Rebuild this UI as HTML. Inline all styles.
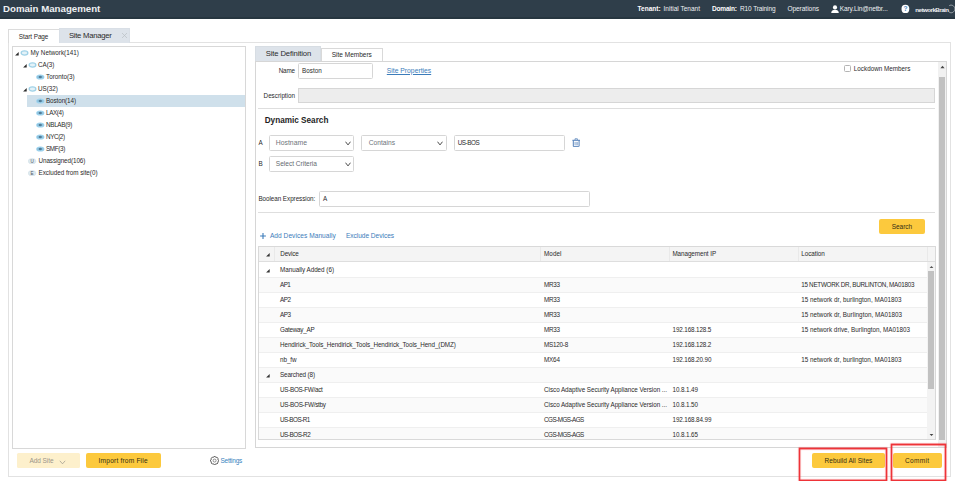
<!DOCTYPE html>
<html>
<head>
<meta charset="utf-8">
<title>Domain Management</title>
<style>
*{box-sizing:border-box;margin:0;padding:0}
html,body{width:955px;height:481px;overflow:hidden;background:#fff;font-family:"Liberation Sans",sans-serif;color:#333;font-size:7px}
div,span,svg{position:absolute}
.t{white-space:nowrap;line-height:1;color:#2a2a2a}
#hdr{left:0;top:0;width:955px;height:19px;background:#2f3e4a}
#hdr .t{color:#eef1f3}
#hdr .t b{color:#fff}
.btn{border-radius:2px;background:#fcc93d}
.inp{border:1px solid #d6d6d6;background:#fff;border-radius:1.5px}
.hr{height:1px;background:#dedede}
.vl{width:1px;background:#e4e4e4}
.lnk{color:#3c7cba}
</style>
</head>
<body>
<div id="hdr">
<div style="left:0;top:17px;width:955px;height:2px;background:#273640"></div>
<div class="t " style="left:3px;top:4.25px;font-size:9.69px;font-weight:bold;">Domain Management</div>
<div class="t " style="left:637.6px;top:5.95px;font-size:6.5px;letter-spacing:0.016px;"><b>Tenant:</b></div>
<div class="t " style="left:663.5px;top:5.95px;font-size:6.5px;letter-spacing:0.009px;">Initial Tenant</div>
<div class="t " style="left:712px;top:5.95px;font-size:6.5px;letter-spacing:-0.172px;"><b>Domain:</b></div>
<div class="t " style="left:740px;top:5.95px;font-size:6.5px;letter-spacing:-0.121px;">R10 Training</div>
<div class="t " style="left:787.4px;top:5.95px;font-size:6.5px;letter-spacing:-0.020px;">Operations</div>
<svg style="left:830.5px;top:4.8px" width="8" height="8.4" viewBox="0 0 8 8.4"><circle cx="4" cy="2.4" r="2.1" fill="#fff"/><path d="M0.2 8.2 C0.2 5.4 1.8 4.7 4 4.7 C6.2 4.7 7.8 5.4 7.8 8.2 Z" fill="#fff"/></svg>
<div class="t " style="left:839.8px;top:5.95px;font-size:6.5px;letter-spacing:-0.120px;">Kary.Lin@netbr...</div>
<svg style="left:901px;top:4px" width="9" height="10" viewBox="0 0 9 10"><ellipse cx="4.4" cy="4.9" rx="3.9" ry="4.2" fill="#fff"/></svg>
<div class="t " style="left:903.5px;top:5.90px;font-size:6.6px;color:#4a86bd;font-weight:bold;">?</div>
<div class="t " style="left:915.3px;top:6.95px;font-size:6.1px;font-weight:bold;letter-spacing:-0.473px;">networkBrain</div>
<svg style="left:945.5px;top:3.5px" width="9.5" height="10" viewBox="0 0 9.5 10"><path d="M3.2 1.7 C5 0.4 8.6 1.4 8.8 4.6 C9 7.4 6.4 9.4 4.2 8.6 C3 8.2 2.2 7.2 2.4 6" fill="none" stroke="#c3c9ce" stroke-width="0.7"/></svg>
</div>
<div class="" style="left:8px;top:42px;width:943.00px;height:435.00px;border:1px solid #e2e2e2;background:#fff"></div>
<div class="" style="left:8px;top:29px;width:52.00px;height:14.00px;border:1px solid #dcdcdc;border-bottom:none;background:#fff"></div>
<div class="t " style="left:18.8px;top:34.20px;font-size:6.4px;letter-spacing:-0.064px;">Start Page</div>
<div class="" style="left:59px;top:28px;width:71.00px;height:14.50px;border:1px solid #d9dfe6;border-bottom:none;background:#dde3ea"></div>
<div class="t " style="left:68.9px;top:32.15px;font-size:7.7px;letter-spacing:-0.250px;">Site Manager</div>
<svg style="left:121px;top:32.2px" width="7" height="7" viewBox="0 0 7 7"><path d="M1 1 L6 6 M6 1 L1 6" stroke="#b9bec3" stroke-width="0.7" fill="none"/></svg>
<div class="" style="left:11.5px;top:46px;width:234.80px;height:403.00px;border:1px solid #d8d8d8;background:#fff"></div>
<div class="" style="left:27.2px;top:95.2px;width:218.30px;height:11.50px;background:#cfe0eb"></div>
<svg style="left:15px;top:51.60px" width="4" height="4" viewBox="0 0 4 4"><path d="M3.7 0 L3.7 3.6 L0.1 3.6 Z" fill="#2b2b2b"/></svg>
<svg style="left:20.2px;top:50.00px" width="9" height="6" viewBox="0 0 9 6"><ellipse cx="4.5" cy="3" rx="3.35" ry="2.05" fill="#e4f2f8" stroke="#9fd1e7" stroke-width="1.3"/></svg>
<div class="t " style="left:30.6px;top:49.55px;font-size:6.3px;letter-spacing:0.023px;">My Network(141)</div>
<svg style="left:23px;top:63.62px" width="4" height="4" viewBox="0 0 4 4"><path d="M3.7 0 L3.7 3.6 L0.1 3.6 Z" fill="#2b2b2b"/></svg>
<svg style="left:27.8px;top:62.02px" width="9" height="6" viewBox="0 0 9 6"><ellipse cx="4.5" cy="3" rx="3.35" ry="2.05" fill="#e4f2f8" stroke="#9fd1e7" stroke-width="1.3"/></svg>
<div class="t " style="left:38px;top:61.57px;font-size:6.3px;">CA(3)</div>
<svg style="left:35.6px;top:73.84px" width="9" height="6" viewBox="0 0 9 6"><ellipse cx="4.3" cy="3" rx="4.1" ry="2.6" fill="#9dd2ed"/><path d="M1.2 3 H7.4" stroke="#76a9c6" stroke-width="0.7"/><ellipse cx="4.3" cy="3" rx="1.6" ry="1.25" fill="#527d98"/></svg>
<div class="t " style="left:46px;top:73.59px;font-size:6.3px;">Toronto(3)</div>
<svg style="left:23px;top:87.66px" width="4" height="4" viewBox="0 0 4 4"><path d="M3.7 0 L3.7 3.6 L0.1 3.6 Z" fill="#2b2b2b"/></svg>
<svg style="left:27.8px;top:86.06px" width="9" height="6" viewBox="0 0 9 6"><ellipse cx="4.5" cy="3" rx="3.35" ry="2.05" fill="#e4f2f8" stroke="#9fd1e7" stroke-width="1.3"/></svg>
<div class="t " style="left:38px;top:85.61px;font-size:6.3px;">US(32)</div>
<svg style="left:35.6px;top:97.88px" width="9" height="6" viewBox="0 0 9 6"><ellipse cx="4.3" cy="3" rx="4.1" ry="2.6" fill="#9dd2ed"/><path d="M1.2 3 H7.4" stroke="#76a9c6" stroke-width="0.7"/><ellipse cx="4.3" cy="3" rx="1.6" ry="1.25" fill="#527d98"/></svg>
<div class="t " style="left:46px;top:97.63px;font-size:6.3px;letter-spacing:-0.092px;">Boston(14)</div>
<svg style="left:35.6px;top:109.90px" width="9" height="6" viewBox="0 0 9 6"><ellipse cx="4.3" cy="3" rx="4.1" ry="2.6" fill="#9dd2ed"/><path d="M1.2 3 H7.4" stroke="#76a9c6" stroke-width="0.7"/><ellipse cx="4.3" cy="3" rx="1.6" ry="1.25" fill="#527d98"/></svg>
<div class="t " style="left:46px;top:109.65px;font-size:6.3px;letter-spacing:-0.368px;">LAX(4)</div>
<svg style="left:35.6px;top:121.92px" width="9" height="6" viewBox="0 0 9 6"><ellipse cx="4.3" cy="3" rx="4.1" ry="2.6" fill="#9dd2ed"/><path d="M1.2 3 H7.4" stroke="#76a9c6" stroke-width="0.7"/><ellipse cx="4.3" cy="3" rx="1.6" ry="1.25" fill="#527d98"/></svg>
<div class="t " style="left:46px;top:121.67px;font-size:6.3px;letter-spacing:-0.295px;">NBLAB(9)</div>
<svg style="left:35.6px;top:133.94px" width="9" height="6" viewBox="0 0 9 6"><ellipse cx="4.3" cy="3" rx="4.1" ry="2.6" fill="#9dd2ed"/><path d="M1.2 3 H7.4" stroke="#76a9c6" stroke-width="0.7"/><ellipse cx="4.3" cy="3" rx="1.6" ry="1.25" fill="#527d98"/></svg>
<div class="t " style="left:46px;top:133.69px;font-size:6.3px;letter-spacing:-0.384px;">NYC(2)</div>
<svg style="left:35.6px;top:145.96px" width="9" height="6" viewBox="0 0 9 6"><ellipse cx="4.3" cy="3" rx="4.1" ry="2.6" fill="#9dd2ed"/><path d="M1.2 3 H7.4" stroke="#76a9c6" stroke-width="0.7"/><ellipse cx="4.3" cy="3" rx="1.6" ry="1.25" fill="#527d98"/></svg>
<div class="t " style="left:46px;top:145.71px;font-size:6.3px;letter-spacing:-0.350px;">SMF(3)</div>
<svg style="left:28.2px;top:157.78px" width="8.4" height="6.4" viewBox="0 0 8.4 6.4"><ellipse cx="4.1" cy="3.2" rx="3.9" ry="2.7" fill="#dfeaef" stroke="#cfdfe6" stroke-width="0.5"/><text x="4.1" y="4.8" font-size="4.6" text-anchor="middle" fill="#505860" font-family="Liberation Sans, sans-serif">U</text></svg>
<div class="t " style="left:38.5px;top:157.73px;font-size:6.3px;letter-spacing:-0.079px;">Unassigned(106)</div>
<svg style="left:28.2px;top:169.80px" width="8.4" height="6.4" viewBox="0 0 8.4 6.4"><ellipse cx="4.1" cy="3.2" rx="3.9" ry="2.7" fill="#dfeaef" stroke="#cfdfe6" stroke-width="0.5"/><text x="4.1" y="4.8" font-size="4.6" text-anchor="middle" fill="#505860" font-family="Liberation Sans, sans-serif">E</text></svg>
<div class="t " style="left:38.5px;top:169.75px;font-size:6.3px;letter-spacing:-0.025px;">Excluded from site(0)</div>
<div class="" style="left:17px;top:453.3px;width:63.00px;height:14.70px;background:#fdf0cc;border-radius:1.5px"></div>
<div class="t " style="left:29.4px;top:458.35px;font-size:6.5px;color:#9a958a;letter-spacing:-0.047px;">Add Site</div>
<svg style="left:58.9px;top:459.6px" width="7" height="5" viewBox="0 0 7 5"><path d="M0.8 0.8 L3.5 3.8 L6.2 0.8" fill="none" stroke="#9a958a" stroke-width="0.7"/></svg>
<div class="btn" style="left:86px;top:453.3px;width:74.60px;height:14.70px;"></div>
<div class="t " style="left:98.6px;top:458.30px;font-size:6.6px;color:#332d14;letter-spacing:0.187px;">Import from File</div>
<svg style="left:210px;top:455.9px" width="9.2" height="9.2" viewBox="0 0 9.2 9.2"><path d="M3.85 0.47 L5.35 0.47 L5.85 1.55 L5.87 1.55 L6.99 1.15 L8.05 2.21 L7.65 3.33 L7.65 3.35 L8.73 3.85 L8.73 5.35 L7.65 5.85 L7.65 5.87 L8.05 6.99 L6.99 8.05 L5.87 7.65 L5.85 7.65 L5.35 8.73 L3.85 8.73 L3.35 7.65 L3.33 7.65 L2.21 8.05 L1.15 6.99 L1.55 5.87 L1.55 5.85 L0.47 5.35 L0.47 3.85 L1.55 3.35 L1.55 3.33 L1.15 2.21 L2.21 1.15 L3.33 1.55 L3.35 1.55 Z" fill="none" stroke="#484848" stroke-width="0.8" stroke-linejoin="round"/><circle cx="4.6" cy="4.6" r="1.5" fill="none" stroke="#505050" stroke-width="0.6"/></svg>
<div class="t " style="left:220.4px;top:458.25px;font-size:6.5px;color:#3a84c0;letter-spacing:-0.223px;">Settings</div>
<div class="" style="left:254.7px;top:46.2px;width:66.80px;height:15.80px;border:1px solid #d7dde3;border-bottom:none;background:#dde3ea"></div>
<div class="t " style="left:265.7px;top:50.35px;font-size:7.7px;letter-spacing:-0.134px;">Site Definition</div>
<div class="" style="left:320.7px;top:47.5px;width:62.30px;height:14.50px;border:1px solid #d9d9d9;border-bottom:none;background:#fff"></div>
<div class="t " style="left:331.7px;top:51.74px;font-size:6.52px;">Site Members</div>
<div class="" style="left:254.7px;top:61px;width:692.30px;height:386.50px;border:1px solid #d6d6d6;background:#fff"></div>
<div class="" style="left:938.3px;top:62px;width:7.70px;height:384.50px;background:#f1f1f1"></div>
<div class="" style="left:939.2px;top:77px;width:5.80px;height:362.60px;background:#c1c1c1"></div>
<svg style="left:939.8px;top:65px" width="5" height="4" viewBox="0 0 5 4"><path d="M0.4 3.2 L2.5 0.8 L4.6 3.2 Z" fill="#444"/></svg>
<div class="t " style="left:278.7px;top:67.75px;font-size:6.3px;letter-spacing:-0.126px;">Name</div>
<div class="inp" style="left:298px;top:63px;width:75.20px;height:16.00px;"></div>
<div class="t " style="left:302px;top:67.65px;font-size:6.3px;letter-spacing:0.031px;">Boston</div>
<div class="t lnk" style="left:386.8px;top:67.71px;font-size:6.77px;text-decoration:underline;">Site Properties</div>
<div class="" style="left:844px;top:65.4px;width:7.00px;height:7.10px;border:1px solid #b4b4b4;border-radius:1.5px;background:#fff"></div>
<div class="t " style="left:853.8px;top:65.95px;font-size:6.3px;letter-spacing:0.014px;">Lockdown Members</div>
<div class="t " style="left:263.6px;top:92.85px;font-size:6.3px;letter-spacing:-0.010px;">Description</div>
<div class="" style="left:298px;top:88px;width:637.20px;height:15.00px;border:1px solid #d6d6d6;background:#ededed"></div>
<div class="hr" style="left:258.4px;top:108.2px;width:676.80px;height:1.00px;"></div>
<div class="t " style="left:264.7px;top:117.20px;font-size:8.2px;color:#1e1e1e;font-weight:bold;">Dynamic Search</div>
<div class="t " style="left:258.4px;top:139.55px;font-size:6.3px;">A</div>
<div class="inp" style="left:268.6px;top:135px;width:85.30px;height:16.00px;"></div>
<div class="t " style="left:275.8px;top:139.57px;font-size:6.85px;color:#6e747a;">Hostname</div>
<svg style="left:344.70000000000005px;top:141.20px" width="6" height="5" viewBox="0 0 6 5"><path d="M0.5 0.7 L3 3.9 L5.5 0.7" fill="none" stroke="#444" stroke-width="0.95"/></svg>
<div class="inp" style="left:361px;top:135px;width:85.80px;height:16.00px;"></div>
<div class="t " style="left:368.7px;top:139.66px;font-size:6.69px;color:#6e747a;">Contains</div>
<svg style="left:437.40000000000003px;top:141.20px" width="6" height="5" viewBox="0 0 6 5"><path d="M0.5 0.7 L3 3.9 L5.5 0.7" fill="none" stroke="#444" stroke-width="0.95"/></svg>
<div class="inp" style="left:454px;top:135px;width:110.70px;height:16.00px;"></div>
<div class="t " style="left:457.7px;top:139.85px;font-size:6.3px;letter-spacing:-0.426px;">US-BOS</div>
<svg style="left:571.6px;top:138px" width="8.4" height="9.2" viewBox="0 0 8.4 9.2"><path d="M0.4 2.3 H8" stroke="#3d6fb0" stroke-width="0.9"/><path d="M3 1.9 V0.8 H5.4 V1.9" fill="none" stroke="#3d6fb0" stroke-width="0.7"/><path d="M1.3 2.6 V8.1 Q1.3 8.7 1.9 8.7 H6.5 Q7.1 8.7 7.1 8.1 V2.6" fill="none" stroke="#3d6fb0" stroke-width="0.9"/><path d="M3 3.9 V7.4 M4.2 3.9 V7.4 M5.4 3.9 V7.4" stroke="#5a86bf" stroke-width="0.6"/></svg>
<div class="t " style="left:258.4px;top:161.25px;font-size:6.3px;">B</div>
<div class="inp" style="left:268.6px;top:156px;width:85.30px;height:16.00px;"></div>
<div class="t " style="left:275.8px;top:160.72px;font-size:6.56px;color:#646a70;">Select Criteria</div>
<svg style="left:344.70000000000005px;top:162.20px" width="6" height="5" viewBox="0 0 6 5"><path d="M0.5 0.7 L3 3.9 L5.5 0.7" fill="none" stroke="#444" stroke-width="0.95"/></svg>
<div class="t " style="left:258.4px;top:195.65px;font-size:6.3px;letter-spacing:-0.047px;">Boolean Expression:</div>
<div class="inp" style="left:319.3px;top:191px;width:270.50px;height:16.00px;"></div>
<div class="t " style="left:322.9px;top:195.85px;font-size:6.3px;">A</div>
<div class="hr" style="left:258.4px;top:212px;width:676.80px;height:1.00px;"></div>
<div class="btn" style="left:879.2px;top:219.2px;width:45.40px;height:14.60px;"></div>
<div class="t " style="left:891.7px;top:223.95px;font-size:6.5px;color:#332d14;letter-spacing:-0.033px;">Search</div>
<svg style="left:260.3px;top:232.7px" width="6" height="6" viewBox="0 0 6 6"><path d="M3 0.1 V5.9 M0.1 3 H5.9" stroke="#3c7cba" stroke-width="1.1"/></svg>
<div class="t lnk" style="left:269.9px;top:232.50px;font-size:6.6px;letter-spacing:0.035px;">Add Devices Manually</div>
<div class="t lnk" style="left:345.9px;top:232.50px;font-size:6.6px;letter-spacing:-0.039px;">Exclude Devices</div>
<div class="" style="left:258px;top:245.8px;width:678.00px;height:194.20px;border:1px solid #d9d9d9;background:#fff"></div>
<div class="" style="left:259px;top:246.8px;width:676.00px;height:15.00px;background:#f4f4f4;border-bottom:1px solid #dedede"></div>
<div class="" style="left:273.5px;top:247px;width:1.00px;height:14.00px;background:#e9e9e9"></div>
<div class="" style="left:540.2px;top:247px;width:1.00px;height:14.00px;background:#e9e9e9"></div>
<div class="" style="left:668.8px;top:247px;width:1.00px;height:14.00px;background:#e9e9e9"></div>
<div class="" style="left:797.8px;top:247px;width:1.00px;height:14.00px;background:#e9e9e9"></div>
<div class="" style="left:927px;top:247px;width:1.00px;height:14.00px;background:#e9e9e9"></div>
<svg style="left:265.6px;top:252.80px" width="4" height="4" viewBox="0 0 4 4"><path d="M3.7 0 L3.7 3.6 L0.1 3.6 Z" fill="#333"/></svg>
<div class="t " style="left:280.3px;top:250.85px;font-size:6.3px;letter-spacing:-0.160px;">Device</div>
<div class="t " style="left:544px;top:250.85px;font-size:6.3px;letter-spacing:0.088px;">Model</div>
<div class="t " style="left:672.4px;top:250.85px;font-size:6.3px;letter-spacing:-0.060px;">Management IP</div>
<div class="t " style="left:801.2px;top:250.85px;font-size:6.3px;letter-spacing:-0.027px;">Location</div>
<div class="" style="left:259px;top:263.0px;width:668.00px;height:15.00px;background:#fff;border-bottom:1px solid #efefef"></div>
<svg style="left:265.8px;top:268.50px" width="4" height="4" viewBox="0 0 4 4"><path d="M3.7 0 L3.7 3.6 L0.1 3.6 Z" fill="#333"/></svg>
<div class="t " style="left:280px;top:266.75px;font-size:6.3px;letter-spacing:-0.016px;">Manually Added (6)</div>
<div class="" style="left:259px;top:278.0px;width:668.00px;height:15.00px;background:#fafafa;border-bottom:1px solid #efefef"></div>
<div class="t " style="left:280px;top:281.75px;font-size:6.3px;letter-spacing:-0.536px;">AP1</div>
<div class="t " style="left:544.1px;top:281.75px;font-size:6.3px;letter-spacing:-0.276px;">MR33</div>
<div class="t " style="left:801.2px;top:281.75px;font-size:6.3px;letter-spacing:-0.275px;">15 NETWORK DR, BURLINTON, MA01803</div>
<div class="" style="left:259px;top:293.0px;width:668.00px;height:15.00px;background:#fff;border-bottom:1px solid #efefef"></div>
<div class="t " style="left:280px;top:296.75px;font-size:6.3px;letter-spacing:-0.503px;">AP2</div>
<div class="t " style="left:544.1px;top:296.75px;font-size:6.3px;letter-spacing:-0.276px;">MR33</div>
<div class="t " style="left:801.2px;top:296.75px;font-size:6.3px;letter-spacing:0.030px;">15 network dr, burlington, MA01803</div>
<div class="" style="left:259px;top:308.0px;width:668.00px;height:15.00px;background:#fafafa;border-bottom:1px solid #efefef"></div>
<div class="t " style="left:280px;top:311.75px;font-size:6.3px;letter-spacing:-0.503px;">AP3</div>
<div class="t " style="left:544.1px;top:311.75px;font-size:6.3px;letter-spacing:-0.276px;">MR33</div>
<div class="t " style="left:801.2px;top:311.75px;font-size:6.3px;letter-spacing:0.025px;">15 network dr, Burlington, MA01803</div>
<div class="" style="left:259px;top:323.0px;width:668.00px;height:15.00px;background:#fff;border-bottom:1px solid #efefef"></div>
<div class="t " style="left:280px;top:326.75px;font-size:6.3px;letter-spacing:-0.237px;">Gateway_AP</div>
<div class="t " style="left:544.1px;top:326.75px;font-size:6.3px;letter-spacing:-0.276px;">MR33</div>
<div class="t " style="left:672.5px;top:326.75px;font-size:6.3px;letter-spacing:-0.122px;">192.168.128.5</div>
<div class="t " style="left:801.2px;top:326.75px;font-size:6.3px;letter-spacing:0.012px;">15 network drive, Burlington, MA01803</div>
<div class="" style="left:259px;top:338.0px;width:668.00px;height:15.00px;background:#fafafa;border-bottom:1px solid #efefef"></div>
<div class="t " style="left:280px;top:341.75px;font-size:6.3px;letter-spacing:-0.076px;">Hendirick_Tools_Hendirick_Tools_Hendirick_Tools_Hend_(DMZ)</div>
<div class="t " style="left:544.1px;top:341.75px;font-size:6.3px;letter-spacing:-0.252px;">MS120-8</div>
<div class="t " style="left:672.5px;top:341.75px;font-size:6.3px;letter-spacing:-0.122px;">192.168.128.2</div>
<div class="" style="left:259px;top:353.0px;width:668.00px;height:15.00px;background:#fff;border-bottom:1px solid #efefef"></div>
<div class="t " style="left:280px;top:356.75px;font-size:6.3px;letter-spacing:-0.062px;">nb_fw</div>
<div class="t " style="left:544.1px;top:356.75px;font-size:6.3px;letter-spacing:-0.215px;">MX64</div>
<div class="t " style="left:672.5px;top:356.75px;font-size:6.3px;letter-spacing:-0.115px;">192.168.20.90</div>
<div class="t " style="left:801.2px;top:356.75px;font-size:6.3px;letter-spacing:0.030px;">15 network dr, burlington, MA01803</div>
<div class="" style="left:259px;top:368.0px;width:668.00px;height:15.00px;background:#fafafa;border-bottom:1px solid #efefef"></div>
<svg style="left:265.8px;top:373.50px" width="4" height="4" viewBox="0 0 4 4"><path d="M3.7 0 L3.7 3.6 L0.1 3.6 Z" fill="#333"/></svg>
<div class="t " style="left:280px;top:371.75px;font-size:6.3px;letter-spacing:-0.127px;">Searched (8)</div>
<div class="" style="left:259px;top:383.0px;width:668.00px;height:15.00px;background:#fff;border-bottom:1px solid #efefef"></div>
<div class="t " style="left:280px;top:386.75px;font-size:6.3px;letter-spacing:-0.285px;">US-BOS-FW/act</div>
<div class="t " style="left:544.1px;top:386.75px;font-size:6.3px;letter-spacing:-0.047px;">Cisco Adaptive Security Appliance Version ...</div>
<div class="t " style="left:672.5px;top:386.75px;font-size:6.3px;letter-spacing:-0.097px;">10.8.1.49</div>
<div class="" style="left:259px;top:398.0px;width:668.00px;height:15.00px;background:#fafafa;border-bottom:1px solid #efefef"></div>
<div class="t " style="left:280px;top:401.75px;font-size:6.3px;letter-spacing:-0.261px;">US-BOS-FW/stby</div>
<div class="t " style="left:544.1px;top:401.75px;font-size:6.3px;letter-spacing:-0.047px;">Cisco Adaptive Security Appliance Version ...</div>
<div class="t " style="left:672.5px;top:401.75px;font-size:6.3px;letter-spacing:-0.097px;">10.8.1.50</div>
<div class="" style="left:259px;top:413.0px;width:668.00px;height:15.00px;background:#fff;border-bottom:1px solid #efefef"></div>
<div class="t " style="left:280px;top:416.75px;font-size:6.3px;letter-spacing:-0.501px;">US-BOS-R1</div>
<div class="t " style="left:544.1px;top:416.75px;font-size:6.3px;letter-spacing:-0.528px;">CGS-MGS-AGS</div>
<div class="t " style="left:672.5px;top:416.75px;font-size:6.3px;letter-spacing:-0.115px;">192.168.84.99</div>
<div class="" style="left:259px;top:428.0px;width:668.00px;height:11.00px;background:#fafafa;"></div>
<div class="t " style="left:280px;top:431.75px;font-size:6.3px;letter-spacing:-0.445px;">US-BOS-R2</div>
<div class="t " style="left:544.1px;top:431.75px;font-size:6.3px;letter-spacing:-0.528px;">CGS-MGS-AGS</div>
<div class="t " style="left:672.5px;top:431.75px;font-size:6.3px;letter-spacing:-0.097px;">10.8.1.65</div>
<div class="" style="left:927px;top:262px;width:8.00px;height:177.00px;background:#f3f3f3"></div>
<div class="" style="left:928px;top:270.5px;width:6.00px;height:118.30px;background:#c1c1c1"></div>
<svg style="left:928.5px;top:264.5px" width="5" height="4" viewBox="0 0 5 4"><path d="M0.6 3 L2.5 0.9 L4.4 3 Z" fill="#555"/></svg>
<svg style="left:928.5px;top:433px" width="5" height="4" viewBox="0 0 5 4"><path d="M0.6 0.9 L2.5 3.1 L4.4 0.9 Z" fill="#444"/></svg>
<div class="btn" style="left:812px;top:453.3px;width:73.00px;height:14.70px;"></div>
<div class="t " style="left:824.6px;top:458.35px;font-size:6.5px;color:#332d14;letter-spacing:0.049px;">Rebuild All Sites</div>
<div class="btn" style="left:893.2px;top:453.3px;width:48.50px;height:14.70px;"></div>
<div class="t " style="left:905px;top:458.35px;font-size:6.5px;color:#332d14;letter-spacing:0.352px;">Commit</div>
<div class="" style="left:799px;top:448px;width:88.00px;height:32.60px;border:1px solid #ee3338;box-shadow:0 0 0.8px 0.4px #ee3338, inset 0 0 0.8px 0.4px #ee3338"></div>
<div class="" style="left:891px;top:443.6px;width:55.00px;height:37.00px;border:1px solid #ee3338;box-shadow:0 0 0.8px 0.4px #ee3338, inset 0 0 0.8px 0.4px #ee3338"></div>
</body>
</html>
